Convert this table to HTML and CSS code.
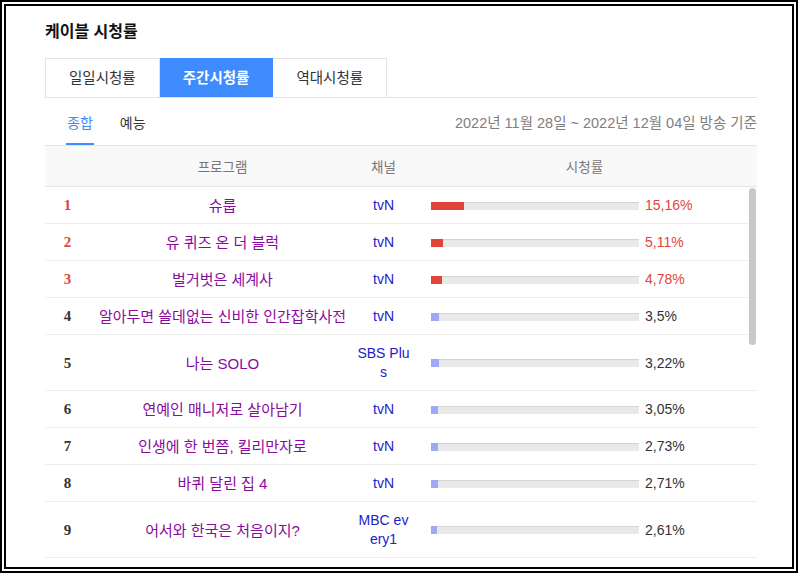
FILE: index.html
```html
<!DOCTYPE html>
<html lang="ko">
<head>
    <meta charset="UTF-8">
    <meta name="viewport" content="width=device-width, initial-scale=1.0">
    <title>케이블 시청률</title>
    <link rel="stylesheet" href="styles.css">
</head>
<body>
    <div class="frame">
        <div class="panel">
            <h2 class="title">케이블 시청률</h2>

            <!-- period tabs -->
            <div class="tabs">
                <a class="tab">일일시청률</a>
                <a class="tab active">주간시청률</a>
                <a class="tab">역대시청률</a>
            </div>

            <div class="subbar">
                <div class="subtabs">
                    <span class="subtab on">종합</span>
                    <span class="subtab">예능</span>
                </div>
                <div class="period">2022년 11월 28일 ~ 2022년 12월 04일 방송 기준</div>
            </div>

            <div class="row thead">
                <div></div>
                <div>프로그램</div>
                <div>채널</div>
                <div>시청률</div>
            </div>

            <div class="tbody">
                <div class="row top">
                    <div class="rank">1</div>
                    <div class="prog">슈룹</div>
                    <div class="ch">tvN</div>
                    <div class="rate"><span class="bar"><span class="fill" style="width: 33px"></span></span><span class="val">15,16%</span></div>
                </div>
                <div class="row top">
                    <div class="rank">2</div>
                    <div class="prog">유 퀴즈 온 더 블럭</div>
                    <div class="ch">tvN</div>
                    <div class="rate"><span class="bar"><span class="fill" style="width: 12px"></span></span><span class="val">5,11%</span></div>
                </div>
                <div class="row top">
                    <div class="rank">3</div>
                    <div class="prog">벌거벗은 세계사</div>
                    <div class="ch">tvN</div>
                    <div class="rate"><span class="bar"><span class="fill" style="width: 11px"></span></span><span class="val">4,78%</span></div>
                </div>
                <div class="row">
                    <div class="rank">4</div>
                    <div class="prog">알아두면 쓸데없는 신비한 인간잡학사전</div>
                    <div class="ch">tvN</div>
                    <div class="rate"><span class="bar"><span class="fill" style="width: 8px"></span></span><span class="val">3,5%</span></div>
                </div>
                <div class="row">
                    <div class="rank">5</div>
                    <div class="prog">나는 SOLO</div>
                    <div class="ch">SBS Plus</div>
                    <div class="rate"><span class="bar"><span class="fill" style="width: 8px"></span></span><span class="val">3,22%</span></div>
                </div>
                <div class="row">
                    <div class="rank">6</div>
                    <div class="prog">연예인 매니저로 살아남기</div>
                    <div class="ch">tvN</div>
                    <div class="rate"><span class="bar"><span class="fill" style="width: 7px"></span></span><span class="val">3,05%</span></div>
                </div>
                <div class="row">
                    <div class="rank">7</div>
                    <div class="prog">인생에 한 번쯤, 킬리만자로</div>
                    <div class="ch">tvN</div>
                    <div class="rate"><span class="bar"><span class="fill" style="width: 7px"></span></span><span class="val">2,73%</span></div>
                </div>
                <div class="row">
                    <div class="rank">8</div>
                    <div class="prog">바퀴 달린 집 4</div>
                    <div class="ch">tvN</div>
                    <div class="rate"><span class="bar"><span class="fill" style="width: 7px"></span></span><span class="val">2,71%</span></div>
                </div>
                <div class="row">
                    <div class="rank">9</div>
                    <div class="prog">어서와 한국은 처음이지?</div>
                    <div class="ch">MBC every1</div>
                    <div class="rate"><span class="bar"><span class="fill" style="width: 6px"></span></span><span class="val">2,61%</span></div>
                </div>
                <div class="thumb"></div>
            </div>
        </div>
    </div>
</body>
</html>
```

FILE: styles.css
```css
body {
    margin: 0;
    background: #fff;
    font-family: "Liberation Sans", "Noto Sans CJK KR", sans-serif;
    color: #333;
}
.frame {
    width: 798px;
    height: 573px;
    box-sizing: border-box;
    border: 6px double #000;
    overflow: hidden;
}
.panel {
    padding: 15px 35px 0 39px;
}
.title {
    margin: 0 0 15px;
    font-size: 16px;
    line-height: 22px;
    font-weight: bold;
    color: #111;
}

/* tabs */
.tabs {
    display: flex;
    border-bottom: 1px solid #e4e4e4;
}
.tab {
    height: 38px;
    line-height: 38px;
    padding: 0 23px;
    font-size: 14.5px;
    color: #333;
    border-top: 1px solid #e2e2e2;
    border-right: 1px solid #e2e2e2;
    cursor: pointer;
}
.tab:first-child {
    border-left: 1px solid #e2e2e2;
}
.tab.active {
    background: #3e8bfd;
    border-color: #3e8bfd;
    color: #fff;
    font-weight: bold;
}

.subbar {
    display: flex;
    justify-content: space-between;
    height: 47px;
}
.subtabs {
    display: flex;
    gap: 25px;
    padding-left: 21px;
}
.subtab {
    display: flex;
    align-items: center;
    padding: 2px 1px 0;
    font-size: 14px;
    color: #333;
    border-bottom: 2px solid transparent;
}
.subtab.on {
    color: #3e8bfd;
    border-bottom-color: #3e8bfd;
}
.period {
    align-self: center;
    font-size: 14.5px;
    color: #808080;
}

/* table */
.row {
    display: grid;
    grid-template-columns: 45px 265px 57px 1fr;
    align-items: center;
    text-align: center;
}
.thead {
    height: 40px;
    background: #f9f9f9;
    border-top: 1px solid #e6e6e6;
    border-bottom: 1px solid #e6e6e6;
    font-size: 13.5px;
    color: #777;
}
.tbody {
    position: relative;
}
.tbody .row {
    padding: 9px 0 8px;
    border-bottom: 1px solid #ececec;
    font-size: 14px;
    line-height: 19px;
}
.rank {
    font-family: "Liberation Serif", serif;
    font-weight: bold;
    font-size: 15px;
    color: #333;
}
.prog {
    font-size: 15px;
    color: #8a0a9e;
}
.ch {
    color: #2121c9;
    word-break: break-all;
}
.rate {
    display: flex;
    align-items: center;
    padding-left: 19px;
    text-align: left;
}
.bar {
    display: block;
    width: 208px;
    height: 8px;
    background: #e9e9e9;
    box-shadow: inset 0 1px 0 #d4d4d4;
}
.fill {
    display: block;
    height: 100%;
    background: #9fa8f6;
}
.val {
    margin-left: 6px;
}
.top .rank,
.top .val {
    color: #e0443a;
}
.top .fill {
    background: #e0443a;
}
.thumb {
    position: absolute;
    top: 1px;
    right: 1px;
    width: 7px;
    height: 157px;
    border-radius: 4px;
    background: #c8c8c8;
}
```
